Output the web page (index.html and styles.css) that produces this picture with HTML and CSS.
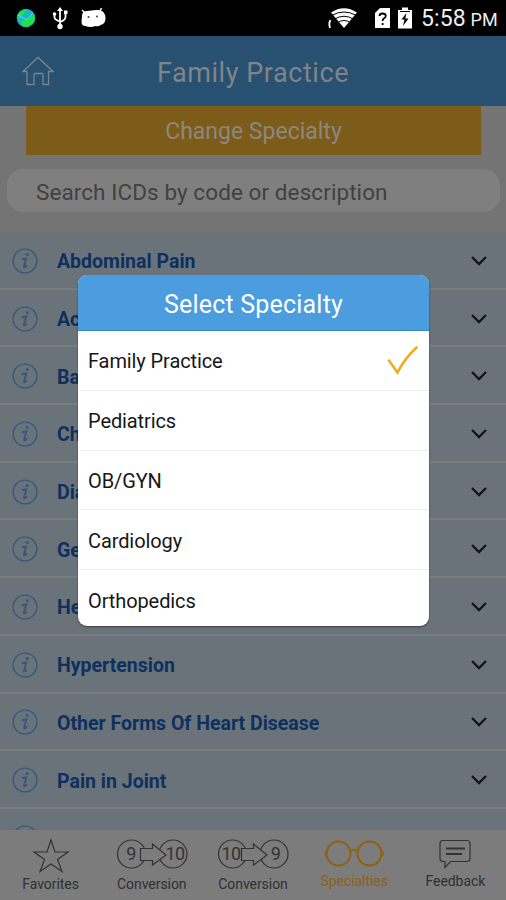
FILE: index.html
```html
<!DOCTYPE html>
<html lang="en">
<head>
<meta charset="utf-8">
<meta name="viewport" content="width=device-width, initial-scale=1">
<title>Family Practice</title>
<link rel="stylesheet" href="styles.css">
</head>
<body>
<svg width="0" height="0" class="defs">
  <symbol id="info" viewBox="0 0 26 26"><circle cx="13" cy="13" r="11.900" fill="none" stroke="currentColor" stroke-width="1.400"/><circle cx="15.200" cy="6.500" r="1.600" fill="currentColor"/><path d="M9.800 11.300 14.300 10.500 12 18.500C11.500 20 13 19.600 15 17.300" fill="none" stroke="currentColor" stroke-width="1.900"/></symbol>
  <symbol id="chev" viewBox="0 0 18 12"><path d="M2 2 9 9 16 2" fill="none" stroke="currentColor" stroke-width="2.300"/></symbol>
</svg>
<div class="screen">
  <div class="status">
    <svg class="status-icons" width="120" height="36" viewBox="0 0 120 36">
      <circle cx="26" cy="18" r="9.300" fill="#18b5c5"/>
      <path d="M18 15c2-4 6-5 8-5l-2 4-5 5zM21 21l5-1 7-5 2 3-2 5-6 4-5-2z" fill="#23e344"/>
      <path d="m18 15 9 5 6-7" stroke="#46ead4" fill="none"/>
      <path d="M60 10v16M54.500 13.500v4q0 2 5.500 4M65.500 12v5q0 3-5.500 5" stroke="#fff" stroke-width="1.800" fill="none"/>
      <path d="m60 7 3 4h-6z" fill="#fff"/><circle cx="60" cy="26.500" r="2.700" fill="#fff"/><circle cx="54.500" cy="14" r="1.800" fill="#fff"/><path d="M64 10.500h3.500V14H64z" fill="#fff"/>
      <path d="M82 16q0-5 5-5l9-1q9-1 9.500 8 0 6-5 7-2 2-5 1-5 2-10 0-4 0-4-4z" fill="#fff"/>
      <path d="m85 13-3-3m18 1 1.500-3" stroke="#fff" stroke-width="1.500"/><circle cx="88.500" cy="17" r="1" fill="#444"/><circle cx="97" cy="16.500" r="1" fill="#444"/>
    </svg>
    <svg class="status-icons" width="92" height="36" viewBox="0 0 92 36">
      <path d="M3 12.500Q16 4 29 12.500L16 28z" fill="#fff"/>
      <path d="M3.500 15.500q12.500-7 25 0M6.500 19q9.500-5.500 19 0M9.500 22.500q6.500-4 13 0" stroke="#000" stroke-width="1" fill="none"/>
      <path d="M2.500 20q-2 3-.5 8" stroke="#fff" stroke-width="1.800" fill="none"/>
      <path d="M47 13l5-5h10v20H47z" fill="#fff"/><path d="M51.500 16q0-2.500 3-2.500 3.300 0 3.300 2.500 0 1.500-2 2.500-1.200.7-1.200 2.500M54.600 23v2" stroke="#000" stroke-width="1.800" fill="none"/>
      <path d="M70 10h4V7.500h6V10h4v18.500H70z" fill="#fff"/><path d="M72 11.500h10" stroke="#000"/><path d="m78.500 13-5 6.500h3l-1.500 6.500 5.500-7.500h-3.200z" fill="#000"/>
    </svg>
    <span class="time">5:58 <span class="pm">PM</span></span>
  </div>
  <header class="header">
    <svg class="home" width="32" height="31" viewBox="0 0 32 31" fill="none" stroke="#7e8589" stroke-width="1.300"><path d="M1 15.500 16 1.500 31 15.500h-4.500V28.500H21V18.500q0-1-1-1h-7q-1 0-1 1v10H5v-13z"/></svg>
    <h1><span>Family Practice</span></h1>
  </header>
  <div class="tools">
    <div class="change"><span>Change Specialty</span></div>
    <div class="search"><span>Search ICDs by code or description</span></div>
  </div>
  <main class="list">
    <div class="row"><svg class="info"><use href="#info"/></svg><b>Abdominal Pain</b><svg class="chev"><use href="#chev"/></svg></div>
    <div class="row"><svg class="info"><use href="#info"/></svg><b>Ac</b><svg class="chev"><use href="#chev"/></svg></div>
    <div class="row"><svg class="info"><use href="#info"/></svg><b>Ba</b><svg class="chev"><use href="#chev"/></svg></div>
    <div class="row"><svg class="info"><use href="#info"/></svg><b>Ch</b><svg class="chev"><use href="#chev"/></svg></div>
    <div class="row"><svg class="info"><use href="#info"/></svg><b>Dia</b><svg class="chev"><use href="#chev"/></svg></div>
    <div class="row"><svg class="info"><use href="#info"/></svg><b>Ge</b><svg class="chev"><use href="#chev"/></svg></div>
    <div class="row"><svg class="info"><use href="#info"/></svg><b>He</b><svg class="chev"><use href="#chev"/></svg></div>
    <div class="row"><svg class="info"><use href="#info"/></svg><b>Hypertension</b><svg class="chev"><use href="#chev"/></svg></div>
    <div class="row"><svg class="info"><use href="#info"/></svg><b>Other Forms Of Heart Disease</b><svg class="chev"><use href="#chev"/></svg></div>
    <div class="row"><svg class="info"><use href="#info"/></svg><b>Pain in Joint</b><svg class="chev"><use href="#chev"/></svg></div>
    <div class="row"><svg class="info"><use href="#info"/></svg></div>
  </main>
  <nav class="nav">
    <div class="tab"><svg width="74" height="36" viewBox="0 0 74 36"><path d="m37 3 4 12h13l-10.500 7.500 4.500 12-11-7.500-11 7.500 4.500-12L20 15h13z"/></svg><span>Favorites</span></div>
    <div class="tab conv"><svg width="74" height="36" viewBox="0 0 74 36"><circle cx="16.500" cy="17" r="14"/><circle cx="58" cy="17" r="14"/><path class="arrow" d="M25.500 11.500H37.500V7L51 18 37.500 28v-4.500H25.500z"/><text x="16" y="23">9</text><text x="60" y="23">10</text></svg><span>Conversion</span></div>
    <div class="tab conv"><svg width="74" height="36" viewBox="0 0 74 36"><circle cx="16.500" cy="17" r="14"/><circle cx="58" cy="17" r="14"/><path class="arrow" d="M25.500 11.500H37.500V7L51 18 37.500 28v-4.500H25.500z"/><text x="15" y="23">10</text><text x="59.500" y="23">9</text></svg><span>Conversion</span></div>
    <div class="tab active raised"><svg width="74" height="36" viewBox="0 0 74 36"><g stroke-width="1.900"><circle cx="21.500" cy="16.500" r="12"/><circle cx="52.500" cy="16.500" r="12"/><path d="M33 14.500q4-3 8 0M9.500 14.500l-1.500 2 1.500 2M64.500 14.500l1.500 2-1.500 2"/></g></svg><span>Specialties</span></div>
    <div class="tab raised"><svg width="74" height="36" viewBox="0 0 74 36"><path d="M25 3.500h24q3 0 3 3v15q0 3-3 3H32.500L27 30.500v-6h-2q-3 0-3-3v-15q0-3 3-3z"/><path d="M28 11.500h19M28 17h16" stroke-width="2"/></svg><span>Feedback</span></div>
  </nav>
  <section class="dialog">
    <h2><span>Select Specialty</span></h2>
    <div class="option"><span>Family Practice</span><svg class="check" width="32" height="30" viewBox="0 0 32 30"><path d="M2 14.500 10.500 26.500Q18 12 29.500 1.500" fill="none" stroke="#f2ab1c" stroke-width="2.600" stroke-linecap="round"/></svg></div>
    <div class="option"><span>Pediatrics</span></div>
    <div class="option"><span>OB/GYN</span></div>
    <div class="option"><span>Cardiology</span></div>
    <div class="option"><span>Orthopedics</span></div>
  </section>
</div>
</body>
</html>
```
FILE: styles.css
```css
* { box-sizing: border-box; }
body { margin: 0; background: #747474; font-family: Roboto, "Liberation Sans", sans-serif; }
.defs { position: absolute; }
svg { display: block; flex: none; }
.screen { position: relative; width: 506px; height: 900px; overflow: hidden; display: flex; flex-direction: column; }
.status { height: 36px; flex: none; background: #000; display: flex; align-items: center; justify-content: flex-end; color: #eee; }
.status-icons:first-child { margin-right: auto; }
.time { width: 85px; margin-left: 1px; padding-top: 3px; font-size: 23px; line-height: 28px; white-space: nowrap; letter-spacing: .1px; }
.pm { font-size: 18px; margin-left: -1px; }
.header { height: 70px; flex: none; background: #275071; display: flex; align-items: center; padding-left: 22px; }
.home { margin-top: 1px; }
.header h1 { margin: 4px 54px 0 0; flex: 1; text-align: center; font-size: 27px; line-height: 32px; font-weight: 400; color: #808488; letter-spacing: .55px; }
.tools { height: 126px; flex: none; background: #747474; padding: 0 6px 0 7px; }
.change { height: 49px; margin: 0 19px; background: #7c5c18; color: #8b8880; text-align: center; font-size: 23px; line-height: 52px; letter-spacing: 0; }
.search { height: 43px; margin-top: 14px; border-radius: 16px; background: #7f7f7f; color: #414141; padding-left: 29px; font-size: 22.500px; line-height: 46px; letter-spacing: .08px; white-space: nowrap; }
.list { flex: 1; overflow: hidden; background: #6a737a; min-height: 0; }
.row { height: 57.700px; border-bottom: 2px solid #787d7f; display: flex; align-items: center; padding: 2px 18px 0 12px; color: #0d305f; }
.info { width: 26px; height: 26px; color: #36587b; }
.row b { margin-left: 19px; flex: 1; font-size: 19.500px; line-height: 24px; font-weight: 700; padding-top: 3px; white-space: nowrap; }
.chev { width: 18px; height: 12px; color: #101519; }
.nav { height: 70px; flex: none; background: #7c7c7c; display: grid; grid-template-columns: repeat(5, 1fr); color: #303030; }
.tab { display: flex; flex-direction: column; align-items: center; padding-top: 7px; font-size: 14px; line-height: 18px; letter-spacing: -.05px; }
.tab svg { fill: none; stroke: #333; stroke-width: 1.200; }
.tab span { margin-top: 2px; }
.raised span { margin-top: -1px; }
.tab .arrow { fill: #7c7c7c; }
.tab text { fill: #333; stroke: none; font-size: 18px; text-anchor: middle; letter-spacing: -.5px; }
.active { color: #90610a; }
.active svg { stroke: #90610a; }
.dialog { position: absolute; left: 78px; top: 275px; width: 351px; height: 351px; border-radius: 9px; overflow: hidden; background: #fff; box-shadow: 0 1px 2px rgba(0,0,0,.45); }
.dialog h2 { margin: 0; height: 56px; background: #4b9ddf; border-bottom: 1px solid #3986c4; color: #fff; text-align: center; font-size: 25px; line-height: 59px; font-weight: 400; letter-spacing: .2px; }
.option { height: 59.800px; border-bottom: 1px solid #ebeef0; display: flex; align-items: center; justify-content: space-between; padding: 2px 10px 0 10px; color: #171717; font-size: 20px; letter-spacing: -.1px; }
.option:last-child { border-bottom: 0; }
```
